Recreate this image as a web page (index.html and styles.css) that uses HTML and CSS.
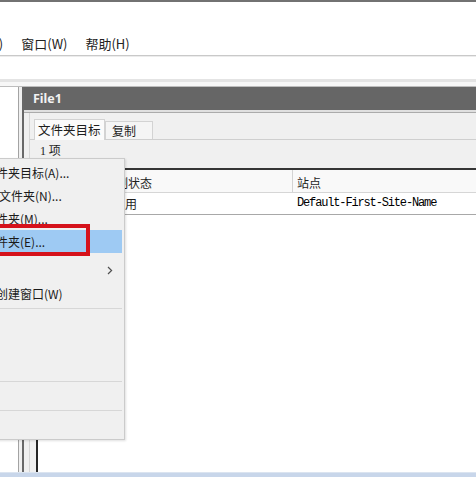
FILE: index.html
```html
<!DOCTYPE html>
<html lang="zh-CN">
<head>
<meta charset="utf-8">
<title>DFS 管理 - File1</title>
<link rel="stylesheet" href="styles.css">
</head>
<body>
<div class="screen">
  <div class="topline"></div>
  <div class="titlebar"></div>
  <div class="menubar">
    <span class="mi">查看(V)</span>
    <span class="mi">窗口(W)</span>
    <span class="mi">帮助(H)</span>
  </div>
  <div class="toolbar"></div>
  <div class="rebar"></div>
  <div class="workspace">
    <div class="tree"></div>
    <div class="gap"></div>
    <div class="mdi">
      <div class="mdi-title">File1</div>
      <div class="mdi-edge"></div>
      <div class="mdi-body">
        <div class="tabctl">
          <div class="tabs">
            <div class="tab sel">文件夹目标</div>
            <div class="tab">复制</div>
          </div>
          <div class="tabpage">
            <div class="count"><span class="num">1</span> 项</div>
            <div class="list">
              <div class="lhead">
                <div class="c c1"></div>
                <div class="c c2">复制状态</div>
                <div class="c c3">站点</div>
              </div>
              <div class="lrow">
                <div class="c c1"></div>
                <div class="c c2 tight">已启用</div>
                <div class="c c3 mono">Default-First-Site-Name</div>
              </div>
            </div>
          </div>
        </div>
      </div>
    </div>
  </div>
  <div class="statusbar"></div>

  <div class="ctxmenu">
    <div class="item">件夹目标(A)...</div>
    <div class="item shift">文件夹(N)...</div>
    <div class="item">件夹(M)...</div>
    <div class="item hot">件夹(E)...</div>
    <div class="item sub"><span class="lbl"></span><svg class="chev" width="6" height="9" viewBox="0 0 6 9"><path d="M1 1 L4.6 4.5 L1 8" fill="none" stroke="#505050" stroke-width="1.2"/></svg></div>
    <div class="item">创建窗口(W)</div>
    <div class="sep"></div>
    <div class="item short"></div>
    <div class="item short"></div>
    <div class="item short"></div>
    <div class="sep"></div>
    <div class="item short"></div>
    <div class="sep"></div>
    <div class="item short"></div>
  </div>
  <div class="redbox"></div>
</div>
</body>
</html>
```

FILE: styles.css
```css
html, body {
  margin: 0;
  padding: 0;
}
body {
  width: 476px;
  height: 477px;
  overflow: hidden;
  background: #ffffff;
  font-family: "Noto Sans CJK SC", "Noto Sans", sans-serif;
  font-size: 12px;
  color: #1e1e1e;
}
.screen {
  position: relative;
  width: 476px;
  height: 477px;
  overflow: hidden;
  display: flex;
  flex-direction: column;
}
.topline {
  height: 2px;
  background: #727272;
  flex: none;
}
.titlebar {
  height: 30px;
  flex: none;
  background: #ffffff;
}
.menubar {
  height: 23px;
  flex: none;
  border-bottom: 1px solid #c9c9c9;
  display: flex;
  align-items: center;
  margin-left: -48px;
  white-space: nowrap;
  font-size: 13px;
}
.mi {
  padding: 0 9px;
  line-height: 23px;
  color: #222;
}
.toolbar {
  height: 23px;
  flex: none;
  border-top: 1px solid #ececec;
  box-sizing: border-box;
}
.rebar {
  height: 7px;
  flex: none;
  box-sizing: border-box;
  border-top: 3px solid #e4e4e4;
  background: #f7f7f7;
}
.workspace {
  height: 386px;
  flex: none;
  box-sizing: border-box;
  border-top: 1px solid #bdbdbd;
  display: flex;
  background: #f0f0f0;
}
.tree {
  width: 18px;
  flex: none;
  background: #ffffff;
  border-right: 1px solid #a3a3a3;
}
.gap {
  width: 3px;
  flex: none;
}
.mdi {
  flex: 1;
  display: flex;
  flex-direction: column;
  border-left: 2px solid #686868;
  min-width: 0;
}
.mdi-title {
  height: 23px;
  flex: none;
  background: #666666;
  color: #f2f2f2;
  font-family: "Noto Sans", sans-serif;
  font-weight: bold;
  font-size: 12.5px;
  line-height: 23px;
  padding-left: 9px;
}
.mdi-edge {
  height: 2px;
  flex: none;
  background: #e0e0e0;
}
.mdi-body {
  flex: 1;
  display: flex;
  border-top: 1px solid #ababab;
  background: #f0f0f0;
  padding-left: 5px;
}
.tabctl {
  flex: 1;
  display: flex;
  flex-direction: column;
  border-left: 1px solid #d6d6d6;
}
.tabs {
  display: flex;
  align-items: flex-end;
  padding: 5px 0 0 4px;
  height: 26px;
  box-sizing: border-box;
  flex: none;
}
.tab {
  box-sizing: border-box;
  border: 1px solid #d3d3d3;
  border-bottom: none;
  height: 18px;
  line-height: 17px;
  padding: 0 0 0 6px;
  width: 48px;
  background: #f5f5f5;
  font-size: 12px;
  white-space: nowrap;
}
.tab.sel {
  height: 21px;
  line-height: 20px;
  width: 71px;
  padding-left: 3px;
  background: #fbfbfb;
  font-size: 12.5px;
  position: relative;
  top: 1px;
  z-index: 1;
}
.tabpage {
  flex: 1;
  display: flex;
  flex-direction: column;
  border-top: 1px solid #cfcfcf;
  padding-left: 6px;
}
.count {
  height: 28px;
  flex: none;
  line-height: 20px;
  padding-left: 4px;
  box-sizing: border-box;
}
.num {
  font-family: "Liberation Serif", serif;
  font-size: 12px;
}
.list {
  flex: 1;
  background: #ffffff;
  border-left: 2px solid #262626;
  border-top: 2px solid #353535;
  white-space: nowrap;
}
.lhead, .lrow {
  display: flex;
  box-sizing: border-box;
}
.lhead {
  height: 23px;
  background: #f9f9f9;
  border-bottom: 1px solid #d6d6d6;
}
.lrow {
  height: 22px;
  border-bottom: 1px solid #a8a8a8;
}
.c {
  box-sizing: border-box;
  padding-left: 4px;
  overflow: hidden;
}
.c.tight {
  padding-left: 1px;
}
.lhead .c {
  line-height: 19px;
  padding-top: 3px;
}
.lrow .c {
  line-height: 21px;
}
.c1 {
  width: 62px;
  flex: none;
}
.c2 {
  width: 193px;
  flex: none;
}
.lhead .c2 {
  border-right: 1px solid #d3d3d3;
}
.c3 {
  flex: 1;
}
.mono {
  font-family: "Liberation Mono", monospace;
  font-size: 12px;
  letter-spacing: -1.15px;
  color: #000;
}
.statusbar {
  height: 5px;
  flex: none;
  box-sizing: border-box;
  background: #c8d6ea;
  border-top: 1px solid #dbe4f0;
}

/* context menu overlay */
.ctxmenu {
  position: absolute;
  left: -40px;
  top: 158px;
  width: 165px;
  box-sizing: border-box;
  background: #f0f0f0;
  border: 1px solid #cbcbcb;
  padding: 2px 2px 3px 2px;
  box-shadow: 1px 1px 2px rgba(0, 0, 0, 0.12);
  white-space: nowrap;
  overflow: hidden;
}
.item {
  height: 23px;
  line-height: 23px;
  padding-left: 33px;
  color: #1a1a1a;
  display: flex;
  align-items: center;
}
.item.shift {
  padding-left: 36px;
}
.item.short {
  height: 22px;
}
.item.hot {
  background: #9ecaf3;
}
.item.sub {
  margin-top: 6px;
  justify-content: space-between;
}
.chev {
  margin-right: 9px;
  display: block;
}
.sep {
  height: 7px;
  display: flex;
  align-items: center;
}
.sep::after {
  content: "";
  display: block;
  height: 1px;
  width: 100%;
  background: #d7d7d7;
}
.redbox {
  position: absolute;
  left: -5px;
  top: 224px;
  width: 95px;
  height: 32px;
  box-sizing: border-box;
  border: 4px solid #d5121b;
}
```
